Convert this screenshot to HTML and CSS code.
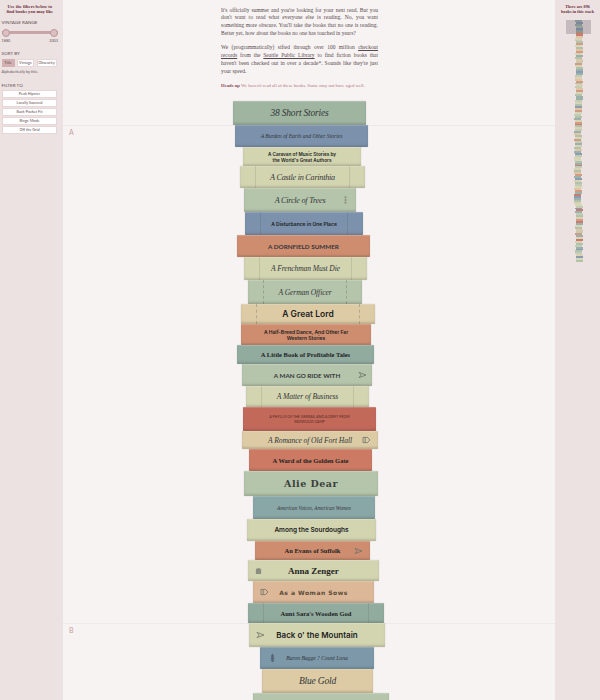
FILE: index.html
```html
<!DOCTYPE html>
<html lang="en">
<head>
  <meta charset="UTF-8">
  <title>Obscure Books</title>
  <link rel="stylesheet" href="styles.css">
</head>
<body>
  <aside class="filters">
    <p class="side-note">Use the filters below to<br>find books you may like</p>

    <h2 class="side-head">VINTAGE RANGE</h2>
    <div class="slider"><span class="knob"></span><span class="knob"></span></div>
    <div class="slider-labels"><span>1880</span><span>2003</span></div>

    <h2 class="side-head sort-head">SORT BY</h2>
    <div class="sort-row">
      <button class="sort-btn active">Title</button>
      <button class="sort-btn">Vintage</button>
      <button class="sort-btn">Obscurity</button>
    </div>
    <p class="sort-note">Alphabetically by title.</p>

    <h2 class="side-head filter-head">FILTER TO</h2>
    <div class="filter-list">
      <button class="filter-btn">Peak Hipster</button>
      <button class="filter-btn">Locally Sourced</button>
      <button class="filter-btn">Back-Pocket Fit</button>
      <button class="filter-btn">Binge Mode</button>
      <button class="filter-btn">Off the Grid</button>
    </div>
  </aside>

  <main class="main">
    <div class="intro">
      <p>It's officially summer and you're looking for your next read. But you don't want to read what everyone else is reading. No, you want something more obscure. You'll take the books that no one is reading. Better yet, how about the books no one has touched in years?</p>
      <p>We (programmatically) sifted through over 100 million <a href="#">checkout</a> <a href="#">records</a> from the <a href="#">Seattle Public Library</a> to find fiction books that haven't been checked out in over a decade*. Sounds like they're just your speed.</p>
      <p class="heads-up"><b>Heads up</b> We haven't read all of these books. Some may not have aged well.</p>
    </div>

    <div class="stack">
      <div class="book sage-dark f-script" style="width:133px;height:24px;margin-left:170px"><span class="title big-wide">38 Short Stories</span></div>

      <section class="section">
        <span class="letter">A</span>
        <div class="book blue f-script" style="width:133px;height:22px;margin-left:172px"><span class="title small">A Burden of Earth and Other Stories</span></div>
        <div class="book cream f-round" style="width:118px;height:19px;margin-left:180px"><span class="title tiny snug">A Caravan of Music Stories by<br>the World's Great Authors</span></div>
        <div class="book cream bands f-script" style="width:125px;height:22px;margin-left:177px"><span class="title big">A Castle in Carinthia</span></div>
        <div class="book sage f-script" style="width:112px;height:24px;margin-left:181px"><span class="title big">A Circle of Trees</span>
          <svg class="ico ico-right" viewBox="0 0 6 10"><circle cx="3" cy="2" r="1.2"/><circle cx="3" cy="5" r="1.2"/><circle cx="3" cy="8" r="1.2"/></svg></div>
        <div class="book blue bands f-round" style="width:118px;height:23px;margin-left:182px"><span class="title tiny">A Disturbance in One Place</span></div>
        <div class="book salmon f-caps" style="width:133px;height:22px;margin-left:174px"><span class="title mid">A DORNFIELD SUMMER</span></div>
        <div class="book cream bands f-script" style="width:123px;height:23px;margin-left:181px"><span class="title med">A Frenchman Must Die</span></div>
        <div class="book sage bands dashed f-script" style="width:114px;height:24px;margin-left:185px"><span class="title med">A German Officer</span></div>
        <div class="book tan bands dashed f-round" style="width:134px;height:20px;margin-left:178px"><span class="title lord">A Great Lord</span></div>
        <div class="book salmon f-round" style="width:130px;height:21px;margin-left:178px"><span class="title tiny">A Half-Breed Dance, And Other Far<br>Western Stories</span></div>
        <div class="book teal f-black" style="width:137px;height:19px;margin-left:174px"><span class="title sm-black">A Little Book of Profitable Tales</span></div>
        <div class="book sage f-caps" style="width:130px;height:22px;margin-left:179px"><span class="title mid">A MAN GO RIDE WITH</span>
          <svg class="ico ico-far arrow" viewBox="0 0 10 8"><path d="M1 1l8 3-8 3 2.5-3z"/></svg></div>
        <div class="book cream bands f-script" style="width:123px;height:21px;margin-left:183px"><span class="title med">A Matter of Business</span></div>
        <div class="book red f-caps" style="width:133px;height:24px;margin-left:180px"><span class="title micro">A PHYLLIS OF THE SIERRAS, AND A DRIFT FROM<br>REDWOOD CAMP</span></div>
        <div class="book tan f-script" style="width:136px;height:18px;margin-left:179px"><span class="title med">A Romance of Old Fort Hall</span>
          <svg class="ico ico-right arrow" viewBox="0 0 10 8"><path d="M1 1h5l3 3-3 3H1zM3.500 1v6"/></svg></div>
        <div class="book coral f-black" style="width:123px;height:22px;margin-left:186px"><span class="title sm-black">A Ward of the Golden Gate</span></div>
        <div class="book sage f-slab" style="width:134px;height:25px;margin-left:181px"><span class="title alie">Alie Dear</span></div>
        <div class="book dusk f-script" style="width:122px;height:23px;margin-left:190px"><span class="title smaller">American Voices, American Women</span></div>
        <div class="book cream f-round" style="width:129px;height:22px;margin-left:184px"><span class="title among">Among the Sourdoughs</span></div>
        <div class="book salmon f-black" style="width:115px;height:19px;margin-left:192px"><span class="title sm-black">An Evans of Suffolk</span>
          <svg class="ico ico-right arrow" viewBox="0 0 10 8"><path d="M1 1l8 3-8 3 2.500-3z"/></svg></div>
        <div class="book cream f-black" style="width:131px;height:21px;margin-left:185px"><span class="title anna">Anna Zenger</span>
          <svg class="ico ico-left" viewBox="0 0 8 9"><path d="M1 2h2V1h2v1h2v6H1z"/></svg></div>
        <div class="book peach f-wide" style="width:121px;height:22px;margin-left:190px"><span class="title wide">As a Woman Sows</span>
          <svg class="ico ico-left arrow" viewBox="0 0 10 8"><path d="M1 1h5l3 3-3 3H1zM3.500 1v6"/></svg></div>
        <div class="book teal bands f-black" style="width:136px;height:20px;margin-left:185px"><span class="title sm-black">Aunt Sara's Wooden God</span></div>
      </section>

      <section class="section">
        <span class="letter">B</span>
        <div class="book cream f-round" style="width:136px;height:24px;margin-left:186px"><span class="title back">Back o' the Mountain</span>
          <svg class="ico ico-left arrow" viewBox="0 0 10 8"><path d="M1 1l8 3-8 3 2.500-3z"/></svg></div>
        <div class="book slate f-script" style="width:114px;height:22px;margin-left:197px"><span class="title small">Baron Bagge ? Count Luna</span>
          <svg class="ico ico-left ico-dark" viewBox="0 0 6 11"><path d="M3 0l2 3-1 2 2 1-2 1 1 2-2 2-2-2 1-2-2-1 2-1-1-2z"/></svg></div>
        <div class="book tan f-script" style="width:111px;height:24px;margin-left:199px"><span class="title big-wide">Blue Gold</span></div>
        <div class="book sage" style="width:136px;height:24px;margin-left:190px"></div>
      </section>
    </div>
  </main>

  <aside class="overview">
    <p class="side-note small-note">There are 896<br>books in this stack</p>
    <div class="strip-wrap">
      <div class="strip" id="strip"></div>
      <div class="strip-window"></div>
    </div>
  </aside>

  <script src="minimap.js"></script>
</body>
</html>
```

FILE: styles.css
```css
* {
  box-sizing: border-box;
}

html, body {
  margin: 0;
  height: 700px;
  overflow: hidden;
}

body {
  display: grid;
  grid-template-columns: 63px 492px 45px;
  background-color: #f7f3f3;
  color: #4a3a3e;
  font-family: "Liberation Serif", serif;
}

/* left sidebar */
.filters {
  background-color: #ece2e2;
  padding: 3.500px 5px 0 1.5px;
}

.side-note {
  margin: 0;
  font-size: 4.6px;
  line-height: 5px;
  font-weight: bold;
  text-align: center;
  color: #6e2f40;
}

.side-head {
  margin: 5.500px 0 0;
  font-family: "Lato", sans-serif;
  font-size: 4.6px;
  line-height: 7px;
  font-weight: 400;
  color: #5f4c50;
}

.slider {
  display: flex;
  justify-content: space-between;
  align-items: center;
  margin: 2.500px 0 0 0.5px;
  height: 8px;
  background: linear-gradient(#c8a4a7, #c8a4a7) center / 100% 3px no-repeat;
}

.knob {
  width: 8px;
  height: 8px;
  border-radius: 50%;
  background-color: #dcbfc1;
  border: 1px solid #b8979a;
}

.slider-labels {
  display: flex;
  justify-content: space-between;
  margin-top: 1px;
  font-family: "Lato", sans-serif;
  font-size: 3.8px;
  line-height: 5px;
  color: #6a585c;
}

.sort-head {
  margin-top: 7px;
}

.sort-row {
  display: flex;
  gap: 2.5px;
  margin-top: 2px;
}

.sort-btn, .filter-btn {
  padding: 0;
  height: 8px;
  border: 1px solid #e6d6d7;
  border-radius: 0;
  background-color: #fff;
  font-family: "Lato", sans-serif;
  font-size: 3.8px;
  color: #5f4c50;
}

.sort-btn {
  width: 17px;
}

.sort-btn.active {
  width: 13px;
  background-color: #d3b0b2;
  border-color: #d3b0b2;
}

.sort-btn:last-child {
  width: 20px;
}

.sort-note {
  margin: 2px 0 0;
  font-family: "Lato", sans-serif;
  font-size: 3.8px;
  line-height: 5px;
  color: #6a585c;
}

.filter-head {
  margin-top: 8px;
}

.filter-list {
  display: flex;
  flex-direction: column;
  gap: 1px;
  margin-top: 1px;
  padding-left: 0.5px;
}

.filter-btn {
  width: 55px;
}

/* middle column */
.main {
  min-width: 0;
}

.intro {
  width: 157px;
  margin-left: 158px;
  padding-top: 6.500px;
  height: 101px;
  font-size: 5.5px;
  line-height: 7.85px;
  text-align: justify;
  color: #574a4e;
}

.intro p {
  margin: 0 0 6.500px;
}

.intro a {
  color: inherit;
  text-decoration: underline;
}

.heads-up {
  font-size: 4.7px;
  text-align: left;
  color: #b0767e;
}

.heads-up b {
  color: #8a4a56;
}

.section {
  border-top: 1px solid #efeaea;
}

.section > .book:first-of-type {
  margin-top: -1px;
}

.letter {
  display: block;
  height: 0;
  margin-left: 6px;
  font-family: "Lato", sans-serif;
  font-size: 7px;
  line-height: 13px;
  color: #c99ea2;
}

.stack {
  display: flex;
  flex-direction: column;
}

/* books */
.book {
  position: relative;
  display: flex;
  align-items: center;
  border-radius: 1px;
  color: #34363a;
  text-align: center;
  box-shadow: 0 0 1px rgba(60, 50, 50, 0.35),
    inset 0 -2px 2px rgba(50, 50, 50, 0.16),
    inset 0 1px 1px rgba(255, 255, 255, 0.18);
}

.sage-dark { background-color: #9fb5a0; }
.sage { background-color: #b5c5ab; }
.cream { background-color: #d3d5b1; }
.blue { background-color: #7b91ac; }
.salmon { background-color: #cf8d70; }
.tan { background-color: #dccba4; }
.teal { background-color: #91ab9f; }
.red { background-color: #c2695a; }
.coral { background-color: #cc7a64; }
.dusk { background-color: #8aa7a8; }
.peach { background-color: #dcb898; }
.slate { background-color: #7c98a9; }

.bands::before, .bands::after {
  content: "";
  flex: none;
  align-self: stretch;
  width: 15px;
  border-right: 1px solid rgba(60, 60, 50, 0.13);
}

.bands::after {
  border-right: 0;
  border-left: 1px solid rgba(60, 60, 50, 0.13);
}

.bands.dashed::before {
  border-right: 1px dashed rgba(60, 60, 50, 0.25);
}

.bands.dashed::after {
  border-left: 1px dashed rgba(60, 60, 50, 0.25);
}

.title {
  flex: 1;
  white-space: nowrap;
}

.f-script { font-family: "Liberation Serif", serif; font-style: italic; }
.f-round { font-family: "Inter", sans-serif; font-weight: 600; }
.f-caps { font-family: "Lato", sans-serif; font-weight: 700; }
.f-black { font-family: "Liberation Serif", serif; font-weight: bold; }
.f-slab { font-family: "DejaVu Serif", serif; font-weight: bold; }
.f-wide { font-family: "DejaVu Sans", sans-serif; font-weight: bold; }

.big { font-size: 8.2px; letter-spacing: -0.25px; }
.big-wide { font-size: 9.5px; letter-spacing: -0.2px; }
.med { font-size: 7.6px; letter-spacing: -0.1px; }
.small { font-size: 5.7px; letter-spacing: -0.05px; }
.smaller { font-size: 5.2px; }
.tiny { font-size: 5px; line-height: 6px; color: #222; }
.snug { font-size: 4.7px; }
.micro { font-size: 3.6px; line-height: 5.500px; font-weight: 400; color: #5a2a24; }
.mid { font-size: 6.3px; }
.lord { font-size: 8.5px; color: #1f1f1f; }
.sm-black { font-size: 6.5px; color: #222; }
.alie { font-size: 9.5px; letter-spacing: 0.5px; color: #3a403c; }
.among { font-size: 6.5px; color: #222; }
.anna { font-size: 9px; color: #1f1f1f; }
.wide { font-size: 6px; letter-spacing: 0.5px; color: #5a4a3a; }
.back { font-size: 8px; color: #222; }

.ico {
  position: absolute;
  top: 50%;
  width: 7px;
  height: 9px;
  transform: translateY(-50%);
  fill: #8b8f80;
}

.ico-right {
  right: 7px;
}

.ico-far {
  right: 5px;
}

.ico-left {
  left: 7px;
}

.ico-left.ico-dark {
  left: 9px;
  fill: #566676;
}

.ico.arrow {
  width: 9px;
  height: 7px;
  fill: none;
  stroke: #6e7268;
  stroke-width: 0.9;
}

/* right sidebar */
.overview {
  background-color: #ece2e2;
  padding-top: 3.500px;
}

.small-note {
  font-size: 4.2px;
}

.strip-wrap {
  position: relative;
  margin-top: 6.500px;
  height: 243px;
}

.strip {
  display: flex;
  flex-direction: column;
  padding-left: 20px;
  opacity: 0.85;
}

.strip-line {
  flex: none;
  width: 7px;
  height: 1.96px;
}

.strip-window {
  position: absolute;
  top: 0;
  left: 11px;
  width: 25px;
  height: 14px;
  background-color: rgba(80, 70, 85, 0.25);
}
```

FILE: minimap.js
```js
// one letter per book in the overview strip
const colors = {
  g: '#a9bda4', c: '#d3d5b1', b: '#7b92ab', t: '#8fa9a3', o: '#cf9072',
  r: '#c56c5c', s: '#dfc19d', k: '#d9cfae', l: '#bacaac'
};
const order = 'tbtgbtorsklgocgsoktgslokgtbtlksogklsocgttlkgbsoclgtkorgklts' +
  'gcoltkgstblkcgtrlkgsotbkglcsotrbtgkclbrtlgkortcgslotcrkgltbglkbcg';
const strip = document.getElementById('strip');
let seed = 7;
order.split('').forEach(function (c, i) {
  seed = (seed * 31 + 11) % 97;
  const line = document.createElement('div');
  line.className = 'strip-line';
  line.style.backgroundColor = colors[c];
  // the stack leans a little, so each line is shifted
  const lean = i > 45 && i < 95 ? -1 : 0;
  line.style.marginLeft = (lean + seed % 2) + 'px';
  strip.appendChild(line);
});
```
